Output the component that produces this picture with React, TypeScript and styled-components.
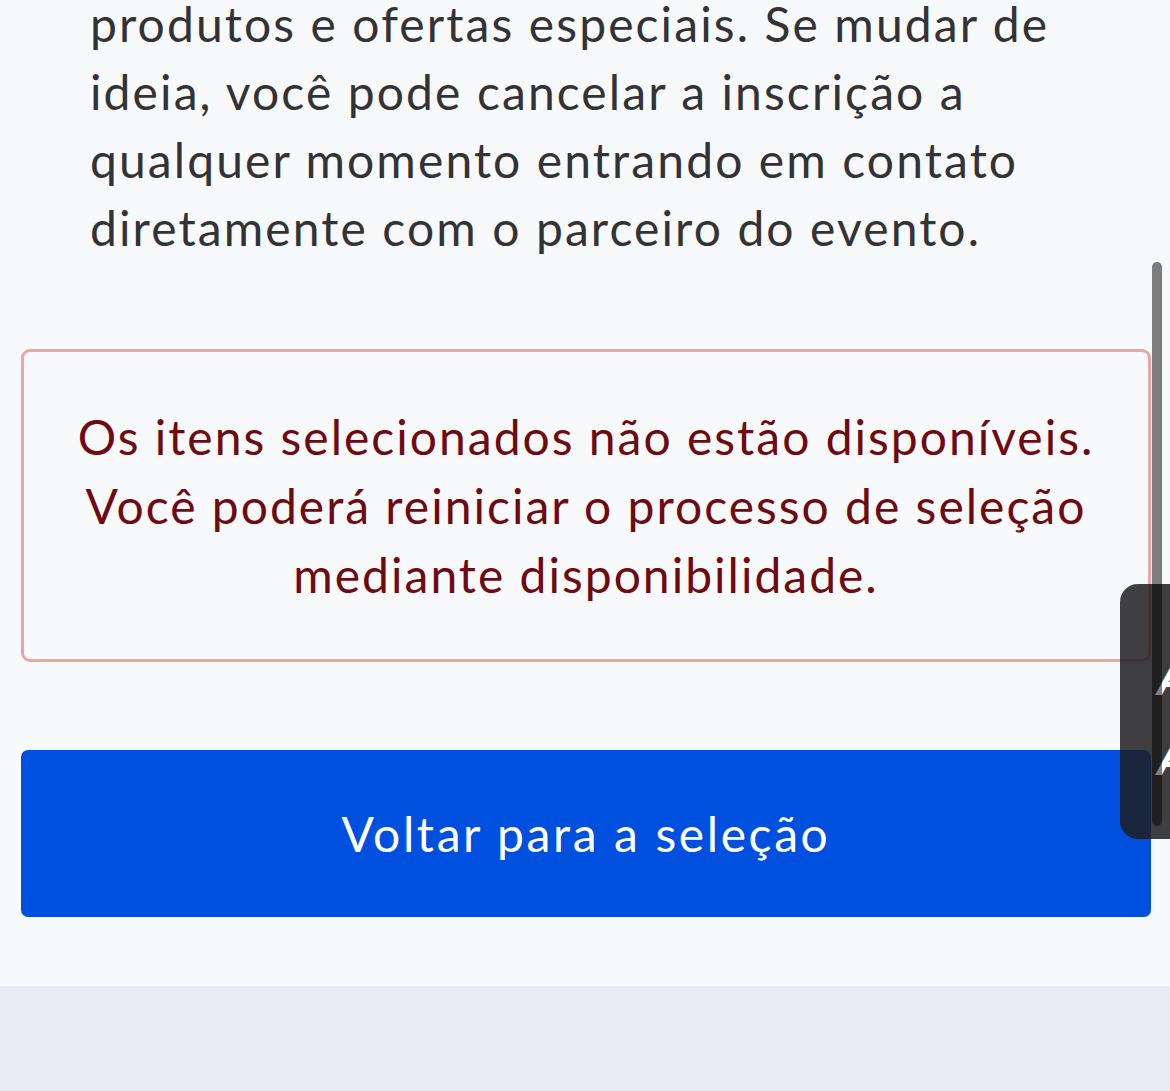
import React from "react";
import styled, { createGlobalStyle } from "styled-components";

const GlobalStyle = createGlobalStyle`
  html, body {
    margin: 0;
    padding: 0;
    background: #f8f9fb;
    overflow: hidden;
  }
  body {
    font-family: Lato, "Noto Sans", sans-serif;
  }
`;

const Page = styled.div`
  position: relative;
  width: 1170px;
  height: 1091px;
  overflow: hidden;
  display: flex;
  flex-direction: column;
  background: #f8f9fb;
`;

const Content = styled.main`
  flex: 1;
  display: flex;
  flex-direction: column;
  padding: 0 19px 0 21px;
`;

const Consent = styled.p`
  margin: -10px 0 0 69px;
  font-size: 48px;
  line-height: 68px;
  letter-spacing: 2.1px;
  color: #333336;
`;

const Line = styled.span`
  display: block;
  white-space: nowrap;
`;

const ErrorBox = styled.div`
  margin-top: 87px;
  border: 3px solid #f1a3a3;
  border-radius: 9px;
  padding: 50px 10px 50px;
  text-align: center;
  font-size: 48px;
  line-height: 69px;
  letter-spacing: 2px;
  color: #6e0a10;
`;

const BackButton = styled.button`
  margin-top: 88px;
  height: 167px;
  border: none;
  border-radius: 7px;
  background: #0050e0;
  color: #ffffff;
  font-family: Lato, "Noto Sans", sans-serif;
  font-size: 48px;
  letter-spacing: 2.6px;
  cursor: pointer;
`;

const Footer = styled.footer`
  height: 105px;
  background: #e8ebf3;
`;

const Panel = styled.div`
  position: absolute;
  left: 1120px;
  top: 584px;
  width: 80px;
  height: 255px;
  border-radius: 18px;
  background: rgba(30, 30, 32, 0.85);
`;

const PanelGlyph = styled.span<{ top: number }>`
  position: absolute;
  left: 36px;
  top: ${(p) => p.top}px;
  font-family: "Liberation Sans", Arial, sans-serif;
  font-style: italic;
  font-weight: 700;
  font-size: 46px;
  line-height: 1;
  color: #ffffff;
`;

const ScrollThumb = styled.div`
  position: absolute;
  left: 1152px;
  top: 262px;
  width: 10px;
  height: 564px;
  border-radius: 5px;
  background: rgba(0, 0, 0, 0.5);
`;

export default function App() {
  return (
    <Page>
      <GlobalStyle />
      <Content>
        <Consent>
          <Line>produtos e ofertas especiais. Se mudar de</Line>
          <Line>ideia, você pode cancelar a inscrição a</Line>
          <Line>qualquer momento entrando em contato</Line>
          <Line>diretamente com o parceiro do evento.</Line>
        </Consent>
        <ErrorBox>
          <Line>Os itens selecionados não estão disponíveis.</Line>
          <Line>Você poderá reiniciar o processo de seleção</Line>
          <Line>mediante disponibilidade.</Line>
        </ErrorBox>
        <BackButton>Voltar para a seleção</BackButton>
      </Content>
      <Footer />
      <Panel>
        <PanelGlyph top={72}>A</PanelGlyph>
        <PanelGlyph top={152}>A</PanelGlyph>
      </Panel>
      <ScrollThumb />
    </Page>
  );
}
